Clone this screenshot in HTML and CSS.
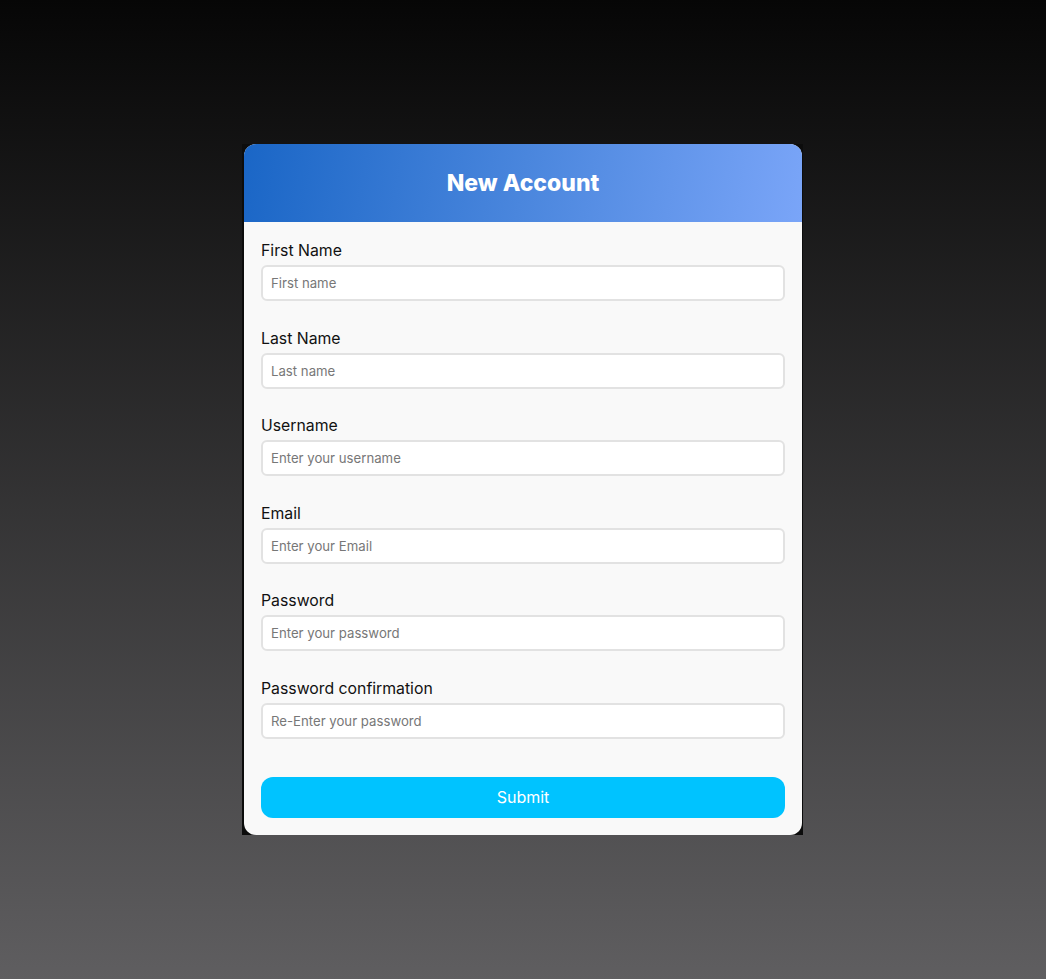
FILE: index.html
```html
<!DOCTYPE html>
<html lang="en">
<head>
<meta charset="utf-8">
<title>New Account</title>
<link rel="stylesheet" href="styles.css">
</head>
<body>
<div class="frame">
  <form class="card">
    <div class="card-header"><h1 class="title">New Account</h1></div>
    <div class="card-body">
      <div class="field">
        <label class="label">First Name</label>
        <input class="input" type="text" placeholder="First name">
      </div>
      <div class="field">
        <label class="label">Last Name</label>
        <input class="input" type="text" placeholder="Last name">
      </div>
      <div class="field">
        <label class="label">Username</label>
        <input class="input" type="text" placeholder="Enter your username">
      </div>
      <div class="field">
        <label class="label">Email</label>
        <input class="input" type="text" placeholder="Enter your Email">
      </div>
      <div class="field">
        <label class="label">Password</label>
        <input class="input" type="password" placeholder="Enter your password">
      </div>
      <div class="field last">
        <label class="label">Password confirmation</label>
        <input class="input" type="password" placeholder="Re-Enter your password">
      </div>
      <button class="submit" type="button">Submit</button>
    </div>
  </form>
</div>
</body>
</html>
```
FILE: styles.css
```css
* { box-sizing: border-box; }
html, body { margin: 0; padding: 0; }
body {
  min-height: 100vh;
  padding-right: 1px;
  display: flex;
  align-items: center;
  justify-content: center;
  background: linear-gradient(to bottom, #060606 0%, #5f5e60 100%);
  font-family: Inter, "Open Sans", sans-serif;
}
.frame {
  background: #0c0c0c;
  padding: 0 1px 0 2px;
  display: flex;
}
.card {
  width: 558px;
  margin: 0;
  background: #f9f9f9;
  border-radius: 12px;
  overflow: hidden;
}
.card-header {
  height: 78px;
  display: flex;
  align-items: center;
  justify-content: center;
  background: linear-gradient(100deg, #1a66c6 0%, #4a86dd 50%, #7aa5f8 100%);
}
.title {
  margin: 0;
  color: #fff;
  font-size: 23px;
  font-weight: 800;
  letter-spacing: 0;
}
.card-body {
  padding: 16px 17px 17px;
  display: flex;
  flex-direction: column;
}
.field {
  display: flex;
  flex-direction: column;
  margin-bottom: 24.5px;
}
.field.last { margin-bottom: 38px; }
.label {
  font-size: 15.8px;
  line-height: 24px;
  padding-top: 1px;
  margin-bottom: 2px;
  color: #111;
}
.input {
  height: 36px;
  border: 2px solid #e2e2e2;
  border-radius: 6px;
  background: #fff;
  padding: 0 8px;
  font-family: inherit;
  font-size: 13.2px;
  color: #333;
  outline: none;
}
.input::placeholder { color: #777; }
.submit {
  height: 41px;
  border: none;
  border-radius: 12px;
  background: #00c3ff;
  color: #fff;
  font-family: inherit;
  font-size: 16px;
  cursor: pointer;
}
```
